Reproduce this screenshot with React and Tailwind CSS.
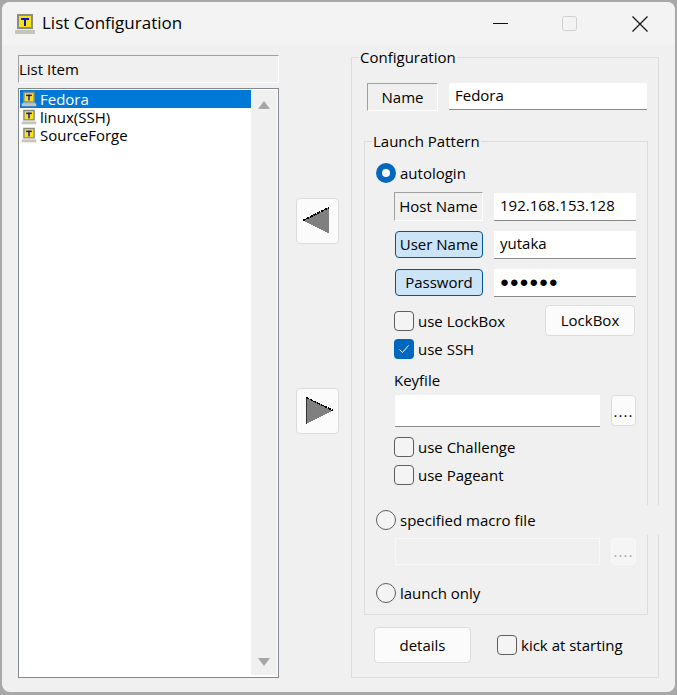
import React from 'react';

function TermIcon({ size = 22 }) {
  return (
    <svg width={size} height={size} viewBox="0 0 22 22" className="shrink-0">
      <rect x="3" y="1" width="16" height="15" fill="#8c8c80" />
      <rect x="5" y="3" width="12" height="11" fill="#f7e11c" />
      <rect x="7" y="5" width="8" height="2" fill="#1010d0" />
      <rect x="10" y="5" width="2" height="8" fill="#1010d0" />
      <rect x="1" y="17" width="20" height="4" fill="#c4c4bc" />
      <rect x="3" y="16" width="16" height="1" fill="#e6e6e0" />
    </svg>
  );
}

function Sunken({ className, children }) {
  return (
    <div className={`flex items-center justify-center border-t border-l border-t-[#a0a0a0] border-l-[#a0a0a0] border-r border-b border-r-white border-b-white ${className}`}>
      {children}
    </div>
  );
}

function BlueLabel({ children }) {
  return (
    <button className="flex h-[27px] w-[88px] ml-px items-center justify-center rounded-[4px] border border-[#005499] bg-[#cce4f7]">
      {children}
    </button>
  );
}

function Input({ className, children }) {
  return (
    <div className={`flex items-center bg-white border-b border-b-[#8a8a8a] pb-[2px] ${className}`}>
      {children}
    </div>
  );
}

function Btn({ className, children }) {
  return (
    <button className={`flex items-center justify-center rounded-[4px] border border-[#dcdcdc] bg-[#fbfbfb] ${className}`}>
      {children}
    </button>
  );
}

function Check({ checked, label, className = '' }) {
  return (
    <div className={`flex items-center gap-1 ${className}`}>
      {checked ? (
        <span className="flex h-5 w-5 items-center justify-center rounded-[4px] bg-[#0067c0]">
          <svg width="12" height="12" viewBox="0 0 12 12" fill="none" stroke="white" strokeWidth="1">
            <path d="M1.5 6.5 L4.5 9.5 L10.5 2.5" />
          </svg>
        </span>
      ) : (
        <span className="h-5 w-5 rounded-[4px] border border-[#5e5e5e] bg-[#f4f4f4]" />
      )}
      <span className="leading-5">{label}</span>
    </div>
  );
}

function Radio({ checked, label }) {
  return (
    <div className="flex items-center gap-1">
      {checked ? (
        <span className="flex h-5 w-5 items-center justify-center rounded-full bg-[#0067c0]">
          <span className="h-2 w-2 rounded-full bg-white" />
        </span>
      ) : (
        <span className="h-5 w-5 rounded-full border border-[#5e5e5e] bg-[#f4f4f4]" />
      )}
      <span className="leading-5">{label}</span>
    </div>
  );
}

const items = ['Fedora', 'linux(SSH)', 'SourceForge'];

export default function App() {
  return (
    <div className="h-[695px] w-[677px] overflow-hidden bg-[#a8a8a8] pt-[2px] pl-[2px] pr-[2px] pb-[3px] font-['Open_Sans','Noto_Sans',sans-serif] text-[15px] text-black">
      <div className="h-full overflow-hidden rounded-lg bg-[#f0f0f0]">
        {/* title bar */}
        <div className="flex h-[43px] items-center bg-[#f3f3f3] pl-[12px]">
          <TermIcon />
          <span className="mb-[2px] ml-[6px] text-[17px]">List Configuration</span>
          <div className="ml-auto flex items-center pr-[27px]">
            <svg width="15" height="15" viewBox="0 0 15 15"><path d="M0 7.5H15" stroke="#111" strokeWidth="1" /></svg>
            <svg width="15" height="15" viewBox="0 0 15 15" className="ml-[54px]"><rect x="0.5" y="0.5" width="14" height="14" rx="2" fill="none" stroke="#cfcfcf" strokeWidth="1" /></svg>
            <svg width="16" height="16" viewBox="0 0 16 16" className="ml-[55px]"><path d="M0.5 0.5L15.5 15.5M15.5 0.5L0.5 15.5" stroke="#111" strokeWidth="1.2" /></svg>
          </div>
        </div>

        <div className="flex">
          {/* list column */}
          <div className="ml-4 mt-[10px] w-[261px]">
            <Sunken className="h-[28px] !justify-start">
              <span>List Item</span>
            </Sunken>
            <div className="mt-[5px] flex h-[590px] border border-[#828790] bg-white p-px">
              <div className="flex-1">
                {items.map((name, i) => (
                  <div key={name} className={`flex h-[18px] items-center gap-[3px] pl-px ${i === 0 ? 'bg-[#0078d7] text-white' : ''}`}>
                    <TermIcon size={16} />
                    <span className="block leading-[18px]">{name}</span>
                  </div>
                ))}
              </div>
              <div className="mb-px flex w-[26px] flex-col items-center justify-between bg-[#f0f0f0] pt-[11px] pb-[9px]">
                <svg width="12" height="8" viewBox="0 0 12 8"><path d="M6 0L12 8H0Z" fill="#a6a6a6" /></svg>
                <svg width="12" height="8" viewBox="0 0 12 8"><path d="M0 0H12L6 8Z" fill="#a6a6a6" /></svg>
              </div>
            </div>
          </div>

          {/* move buttons */}
          <div className="ml-[17px] mt-[153px] flex w-[55px] flex-col gap-[144px]">
            <Btn className="h-[46px] w-[43px] pr-[3px] pb-[2px]">
              <svg width="27" height="27" viewBox="0 0 27 27" shapeRendering="crispEdges">
                <path d="M0 13.5L26 0.5V26.5Z" fill="#808080" />
                <path d="M0 13.5L26 0.5" stroke="#000" strokeWidth="1.5" strokeDasharray="3 1" />
              </svg>
            </Btn>
            <Btn className="h-[46px] w-[43px] pl-[4px] pb-[2px]">
              <svg width="27" height="27" viewBox="0 0 27 27" shapeRendering="crispEdges">
                <path d="M0.5 0.5L27 13.5L0.5 26.5Z" fill="#808080" />
                <path d="M0.5 0.5L27 13.5" stroke="#000" strokeWidth="1.5" strokeDasharray="3 1" />
                <path d="M0.5 0.5V26.5" stroke="#333" strokeWidth="1" />
              </svg>
            </Btn>
          </div>

          {/* configuration */}
          <fieldset className="mt-px w-[308px] min-w-0 border border-[#dcdcdc] pt-[15px]">
            <legend className="ml-[7px] h-[22px] px-px leading-[22px]">Configuration</legend>
            <div className="ml-[15px] flex items-start gap-[11px]">
              <Sunken className="h-[28px] w-[71px]">Name</Sunken>
              <Input className="h-[27px] w-[198px] pl-[6px]">Fedora</Input>
            </div>

            <fieldset className="ml-3 mt-[19px] w-[284px] min-w-0 border border-[#dcdcdc] pb-[11px]">
              <legend className="ml-[7px] h-[22px] px-px leading-[22px]">Launch Pattern</legend>
              <div className="ml-[11px] mt-[11px]">
                <Radio checked label="autologin" />
              </div>
              <div className="ml-[29px] w-[243px]">
                <div className="mt-[9px] flex items-start gap-[11px]">
                  <Sunken className="h-[29px] w-[89px]">Host Name</Sunken>
                  <Input className="mt-px h-[28px] w-[142px] pl-[6px]">192.168.153.128</Input>
                </div>
                <div className="mt-[10px] flex items-start gap-[11px]">
                  <BlueLabel>User Name</BlueLabel>
                  <Input className="h-[28px] w-[142px] pl-[6px]">yutaka</Input>
                </div>
                <div className="mt-[10px] flex items-start gap-[11px]">
                  <BlueLabel>Password</BlueLabel>
                  <Input className="h-[28px] w-[142px] pl-[6px] tracking-[0.7px]">●●●●●●</Input>
                </div>
                <div className="mt-2 flex items-center justify-between pr-[2px]">
                  <Check label="use LockBox" />
                  <Btn className="h-[31px] w-[90px]">LockBox</Btn>
                </div>
                <Check checked label="use SSH" className="mt-[3px]" />
                <div className="mt-[11px] leading-5">Keyfile</div>
                <div className="mt-[5px] flex items-start gap-[11px]">
                  <Input className="ml-px h-[32px] w-[205px]" />
                  <Btn className="h-[31px] w-[25px] items-end pb-[6px] leading-none tracking-[1px]">....</Btn>
                </div>
                <Check label="use Challenge" className="mt-[10px]" />
                <Check label="use Pageant" className="mt-2" />
              </div>

              {/* this row paints over the group borders, as in the dialog */}
              <div className="relative z-10 mt-5 flex h-[30px] w-[295px] items-center bg-[#f0f0f0] pl-[11px]">
                <Radio label="specified macro file" />
              </div>
              <div className="ml-[30px] mt-[3px] flex items-start gap-[11px]">
                <div className="h-[27px] w-[205px] border border-[#f8f8f8]" />
                <button className="flex h-[27px] w-[25px] items-center justify-center rounded-[4px] border border-[#f8f8f8] bg-[#f5f5f5] leading-none tracking-[1px] text-[#a8a8a8]">....</button>
              </div>
              <div className="ml-[11px] mt-[18px]">
                <Radio label="launch only" />
              </div>
            </fieldset>

            <div className="ml-[22px] mt-3 mb-[13px] flex items-center">
              <Btn className="h-9 w-[97px]">details</Btn>
              <Check label="kick at starting" className="ml-[26px]" />
            </div>
          </fieldset>
        </div>
      </div>
    </div>
  );
}
